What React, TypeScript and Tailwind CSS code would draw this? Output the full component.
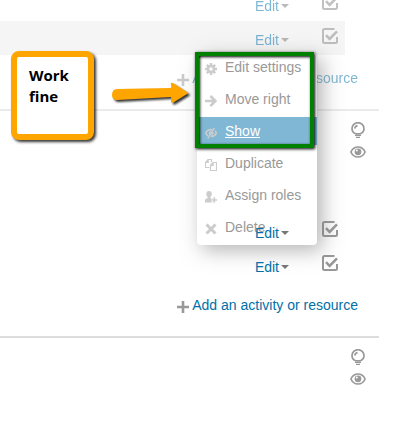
import React from "react";
import clsx from "clsx";

const GearIcon = () => (
  <svg viewBox="0 0 12 12" className="w-3 h-3" fill="none" stroke="currentColor">
    <circle cx="6" cy="6" r="3" strokeWidth="2.4" />
    <path
      d="M6 0v2.4M6 9.6V12M0 6h2.4M9.6 6H12M1.8 1.8l1.6 1.6M8.6 8.6l1.6 1.6M1.8 10.2l1.6-1.6M8.6 3.4l1.6-1.6"
      strokeWidth="2.4"
    />
  </svg>
);

const ArrowIcon = () => (
  <svg viewBox="0 0 12 12" className="w-3 h-3" fill="none" stroke="currentColor" strokeWidth="2.6">
    <path d="M0 6h10M5.4 1L10.4 6l-5 5" />
  </svg>
);

const HiddenIcon = () => (
  <svg viewBox="0 0 12 12" className="w-3 h-3" fill="none" stroke="currentColor">
    <path d="M7.4 2.8C4 2.2 1.8 3.8.8 6c.5 1.3 1.2 2.2 2.2 2.8M10 3.8c.6.5 1 1.2 1.3 2.2-1 2.3-3 3.6-5.6 3.3" strokeWidth="1.6" />
    <path d="M5.6 4.4L4.2 7.2M8 5.2c0 1.4-.7 2.2-1.8 2.6" strokeWidth="1.8" />
    <path d="M9.4.8L2.8 11.4" strokeWidth="1.5" />
  </svg>
);

const DuplicateIcon = () => (
  <svg viewBox="0 0 12 12" className="w-3 h-3" fill="none" stroke="currentColor" strokeWidth="1.2">
    <path d="M4.5 8.5h-4v-5l2.500-3h3.500v2.500M3.200.5v3H.5" />
    <path d="M5.500 6.500l2.500-3h3.500v8h-6zM8.200 3.500v3H5.500" />
  </svg>
);

const RolesIcon = () => (
  <svg viewBox="0 0 12 12" className="w-3 h-3" fill="currentColor">
    <path d="M4 0c1.8 0 2.8 1.2 2.8 2.9C6.800 4.300 6.200 5.300 5.400 6v.9l2 .8v3.800H0V9c0-1 1-1.400 2.700-2.100V6C1.800 5.300 1.300 4.300 1.300 2.900 1.300 1.200 2.200 0 4 0z" />
    <path d="M9.300 6v6M6.300 9H12" stroke="#fff" strokeWidth="3" />
    <path d="M9.300 6.200v5.600M6.500 9H12" stroke="currentColor" strokeWidth="1.6" />
  </svg>
);

const DeleteIcon = () => (
  <svg viewBox="0 0 12 12" className="w-3 h-3" fill="none" stroke="currentColor" strokeWidth="3">
    <path d="M1.5 1.5l9 9M10.5 1.5l-9 9" />
  </svg>
);

const PlusIcon = () => (
  <svg viewBox="0 0 12 12" className="w-3 h-3 mt-1 text-[#999]" fill="none" stroke="currentColor" strokeWidth="2.6">
    <path d="M6 0v12M0 6h12" />
  </svg>
);

const BulbIcon = () => (
  <svg viewBox="0 0 16 16" className="w-4 h-4" fill="none" stroke="currentColor">
    <path d="M5.6 11.8C3.4 10.8 2 9 2 6.7a6 6 0 0 1 12 0c0 2.3-1.4 4.1-3.6 5.1z" strokeWidth="1.7" />
    <path d="M5 6.5c0-1.600 1-2.700 2.600-2.900" strokeWidth="1.8" />
    <path d="M5 13.5h6M6 15.400h4" strokeWidth="1.1" />
  </svg>
);

const EyeIcon = () => (
  <svg viewBox="0 0 16 12" className="w-4 h-3" fill="none" stroke="currentColor">
    <path d="M.9 6C2.4 2.7 4.8 1 8 1s5.6 1.7 7.100 5C13.600 9.300 11.200 11 8 11S2.400 9.300.9 6z" strokeWidth="1.7" />
    <circle cx="8" cy="5.8" r="3.4" fill="currentColor" stroke="none" />
    <circle cx="6.8" cy="4.6" r="1" fill="#fff" stroke="none" />
  </svg>
);

const menuItems = [
  { label: "Edit settings", Icon: GearIcon },
  { label: "Move right", Icon: ArrowIcon },
  { label: "Show", Icon: HiddenIcon, active: true },
  { label: "Duplicate", Icon: DuplicateIcon },
  { label: "Assign roles", Icon: RolesIcon },
  { label: "Delete", Icon: DeleteIcon },
];

const ActivityRow = ({ shaded, faded }: { shaded?: boolean; faded?: boolean }) => (
  <div className={clsx("mr-[34px] h-[34px] pr-[7px] flex justify-end gap-[33px]", shaded && "bg-[#f5f5f5]")}>
    <button className={clsx("relative z-20 mt-[9px] h-5 flex items-center text-[#0070a8]", faded && "opacity-50")}>
      Edit
      <span className="ml-[2px] border-x-4 border-t-4 border-x-transparent border-t-[#777]" />
    </button>
    <label className={clsx("mt-[7px] w-4 h-4 relative text-[#999]", faded && "opacity-60")}>
      <input type="checkbox" defaultChecked aria-label="Completion" className="absolute inset-0 opacity-0" />
      <svg viewBox="0 0 16 16" className="w-4 h-4" fill="none" stroke="currentColor">
        <path d="M12.5 1h-10Q1 1 1 2.500v11Q1 15 2.500 15h11q1.500 0 1.500-1.500V9" strokeWidth="2" />
        <path d="M4 7.200l3.600 3.600L15 3.300" strokeWidth="2.6" />
      </svg>
    </label>
  </div>
);

const AddActivity = ({ faded }: { faded?: boolean }) => (
  <div className={clsx("mt-[13px] mb-[21px] mr-[21px] flex justify-end items-center gap-[3px]", faded && "opacity-50")}>
    <PlusIcon />
    <a href="#add" className="text-[#0070a8]">Add an activity or resource</a>
  </div>
);

const SectionTools = () => (
  <div className="pt-[11px] pr-[13px] flex flex-col items-end gap-2 text-[#999]">
    <button title="Highlight"><BulbIcon /></button>
    <button title="Hide section"><EyeIcon /></button>
  </div>
);

const ActionMenu = () => (
  <div className="absolute z-10 top-[53px] right-[62px] w-[120px]">
    <ul className="pb-1 flex flex-col gap-1 rounded-[4px] bg-white shadow-[5px_5px_20px_rgba(102,102,102,0.5)]">
      {menuItems.map(({ label, Icon, active }) => (
        <li key={label}>
          <a
            href="#menu"
            className={clsx("h-7 pl-2 flex items-center gap-2", active ? "bg-[#80b7d4] text-white underline" : "text-[#999]")}
          >
            <span className="mt-1 text-[#ccc]"><Icon /></span>
            {label}
          </a>
        </li>
      ))}
    </ul>

    {/* highlight around the first three actions */}
    <div className="absolute -top-px -left-[2px] w-[119px] h-[96px] border-4 border-[#008000] shadow-[1px_1px_3px_#000,inset_1px_1px_3px_#000] pointer-events-none" />

    <svg
      viewBox="0 0 80 26"
      className="absolute top-[28px] -left-[86px] w-20 h-[26px] drop-shadow-[2px_2px_1px_rgba(0,0,0,0.8)] pointer-events-none"
    >
      <path
        d="M6 8L59 7Q61 7 60 4Q59 1 62 2L76 11Q78 12 76 13L63 21Q59 23 60 19Q61 16 59 16L6 19Q1 19 1 14Q1 8 6 8z"
        fill="#ffa500"
      />
    </svg>
  </div>
);

export default function App() {
  return (
    <main className="relative min-h-screen overflow-hidden bg-white pr-[41px] font-['Liberation_Sans',Arial,sans-serif] text-sm">
      <div className="relative flow-root">
        <section className="-mt-[13px]">
          <ActivityRow faded />
          <ActivityRow shaded faded />
          <AddActivity faded />
        </section>
        <section className="border-t-2 border-[#ebebeb]">
          <SectionTools />
          <div className="mt-[56px]">
            <ActivityRow />
            <ActivityRow />
          </div>
          <AddActivity />
        </section>
        <section className="border-t-2 border-[#ddd]">
          <SectionTools />
        </section>
        <ActionMenu />
      </div>

      <aside className="absolute z-20 top-[51px] left-[11px] w-[83px] h-[89px] pt-2 pl-3 rounded-lg border-6 border-[#ffa500] bg-white text-black font-['Open_Sans',sans-serif] font-bold text-[15px] leading-[21px] shadow-[2px_2px_3px_rgba(0,0,0,0.8)]">
        Work
        <br />
        fine
      </aside>
    </main>
  );
}
